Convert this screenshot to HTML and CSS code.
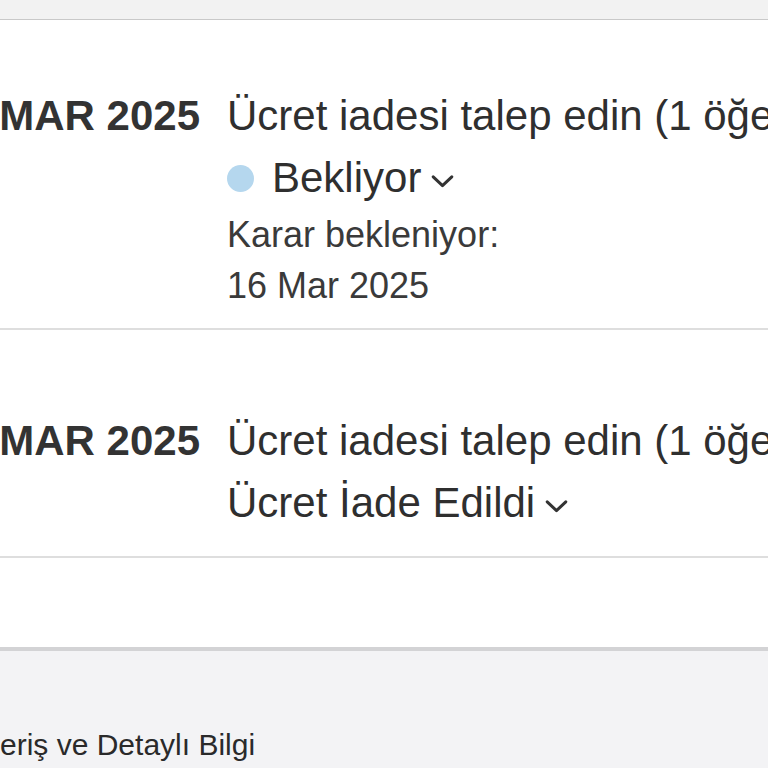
FILE: index.html
```html
<!DOCTYPE html>
<html lang="tr">
<head>
<meta charset="utf-8">
<title>Ücret iadeleri</title>
<link rel="stylesheet" href="styles.css">
</head>
<body>
<div class="topbar"></div>
<main class="list">
  <section class="row row-first">
    <div class="date"><span>16 MAR 2025</span></div>
    <div class="info">
      <div class="title">Ücret iadesi talep edin (1 öğe)</div>
      <div class="status">
        <span class="dot"></span>
        <span>Bekliyor</span>
        <svg class="chev" viewBox="0 0 24 14" width="23" height="13"><path d="M2 2 L12 11.5 L22 2" fill="none" stroke="#333" stroke-width="3.2" stroke-linecap="round" stroke-linejoin="round"/></svg>
      </div>
      <div class="sub">Karar bekleniyor:</div>
      <div class="sub">16 Mar 2025</div>
    </div>
  </section>
  <section class="row">
    <div class="date"><span>10 MAR 2025</span></div>
    <div class="info">
      <div class="title">Ücret iadesi talep edin (1 öğe)</div>
      <div class="status">
        <span>Ücret İade Edildi</span>
        <svg class="chev" viewBox="0 0 24 14" width="23" height="13"><path d="M2 2 L12 11.5 L22 2" fill="none" stroke="#333" stroke-width="3.2" stroke-linecap="round" stroke-linejoin="round"/></svg>
      </div>
    </div>
  </section>
  <div class="spacer"></div>
</main>
<footer class="footer">
  <p class="footer-link">eriş ve Detaylı Bilgi</p>
</footer>
</body>
</html>
```

FILE: styles.css
```css
html, body {
  margin: 0;
  padding: 0;
}
body {
  font-family: "Liberation Sans", Arial, sans-serif;
  color: #2f2f2f;
  background: #f3f3f5;
  overflow: hidden;
  width: 768px;
  height: 768px;
}
.topbar {
  height: 19px;
  background: #f2f2f2;
  border-bottom: 1px solid #c9c9c9;
}
.list {
  background: #ffffff;
  border-bottom: 4px solid #d3d3d5;
}
.row {
  display: grid;
  grid-template-columns: 200px 1fr;
  column-gap: 27px;
  padding: 80px 0 22px;
  border-bottom: 2px solid #dedede;
}
.row-first {
  padding-top: 65px;
  padding-bottom: 17px;
}
.date {
  display: flex;
  justify-content: flex-end;
  white-space: nowrap;
  font-weight: bold;
  font-size: 42px;
  line-height: 62px;
  height: 62px;
  color: #333;
}
.info {
  min-width: 0;
  white-space: nowrap;
}
.title {
  font-size: 42px;
  line-height: 62px;
  color: #2f2f2f;
}
.status {
  display: flex;
  align-items: center;
  font-size: 42px;
  line-height: 62px;
  color: #2f2f2f;
}
.dot {
  width: 27px;
  height: 27px;
  border-radius: 50%;
  background: #b5d7ee;
  margin-right: 18px;
  flex: none;
}
.chev {
  margin-left: 10px;
  margin-top: 6px;
  flex: none;
}
.sub {
  font-size: 36px;
  line-height: 51px;
  color: #3a3a3a;
}
.spacer {
  height: 89px;
}
.footer {
  padding-top: 74px;
}
.footer-link {
  margin: 0;
  font-size: 30px;
  line-height: 40px;
  color: #2a2a2a;
}
```
